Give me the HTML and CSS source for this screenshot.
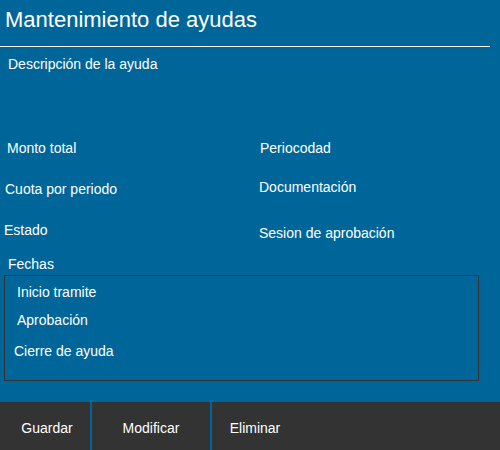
FILE: index.html
```html
<!DOCTYPE html>
<html lang="es">
<head>
<meta charset="utf-8">
<title>Mantenimiento de ayudas</title>
<link rel="stylesheet" href="styles.css">
</head>
<body>
<div class="app">
  <header class="header">
    <h1 class="title">Mantenimiento de ayudas</h1>
  </header>
  <main class="content">
    <div class="desc">Descripción de la ayuda</div>
    <div class="grid">
      <div class="lbl monto">Monto total</div>
      <div class="lbl perio">Periocodad</div>
      <div class="lbl cuota">Cuota por periodo</div>
      <div class="lbl docu">Documentación</div>
      <div class="lbl estado">Estado</div>
      <div class="lbl sesion">Sesion de aprobación</div>
    </div>
    <div class="lbl fechas">Fechas</div>
    <div class="box">
      <div class="lbl inicio">Inicio tramite</div>
      <div class="lbl aprob">Aprobación</div>
      <div class="lbl cierre">Cierre de ayuda</div>
    </div>
  </main>
  <footer class="footer">
    <button class="btn btn-guardar">Guardar</button>
    <button class="btn btn-modificar">Modificar</button>
    <button class="btn btn-eliminar">Eliminar</button>
  </footer>
</div>
</body>
</html>
```

FILE: styles.css
```css
html, body {
  margin: 0;
  padding: 0;
}
body {
  background: #006699;
  color: #ffffff;
  font-family: "Liberation Sans", Arial, sans-serif;
  width: 500px;
  height: 450px;
  overflow: hidden;
}
.app {
  display: flex;
  flex-direction: column;
  height: 450px;
}
.header {
  width: 490px;
  height: 46px;
  border-bottom: 1px solid #ffffff;
}
.title {
  margin: 0;
  padding-left: 5px;
  font-size: 22px;
  font-weight: normal;
  line-height: 40px;
}
.content {
  flex: 1;
  display: flex;
  flex-direction: column;
}
.lbl, .desc {
  font-size: 14px;
  line-height: 16px;
}
.desc {
  margin-top: 9px;
  margin-left: 8px;
}
.grid {
  margin-top: 68px;
  display: grid;
  grid-template-columns: 255px 1fr;
  grid-auto-rows: 41px;
}
.monto { margin-left: 7px; }
.perio { margin-left: 5px; }
.cuota { margin-left: 5px; }
.docu { margin-left: 4px; margin-top: -2px; }
.estado { margin-left: 4px; }
.sesion { margin-left: 4px; margin-top: 3px; }
.fechas {
  margin-top: -7px;
  margin-left: 8px;
}
.box {
  margin-top: 3px;
  margin-left: 4px;
  width: 473px;
  height: 104px;
  border: 1px solid #333333;
  display: flex;
  flex-direction: column;
}
.inicio { margin-top: 8px; margin-left: 12px; }
.aprob { margin-top: 12px; margin-left: 12px; }
.cierre { margin-top: 15px; margin-left: 9px; }
.footer {
  height: 48px;
  background: #333333;
  display: flex;
}
.btn {
  box-sizing: border-box;
  background: transparent;
  border: none;
  color: #ffffff;
  font-family: "Liberation Sans", Arial, sans-serif;
  font-size: 14px;
  padding: 4px 0 0 0;
  margin: 0;
  height: 48px;
}
.btn-guardar { width: 90px; padding-left: 4px; }
.btn-modificar { width: 120px; border-left: 2px solid #006699; }
.btn-eliminar { width: 88px; border-left: 2px solid #006699; }
```
